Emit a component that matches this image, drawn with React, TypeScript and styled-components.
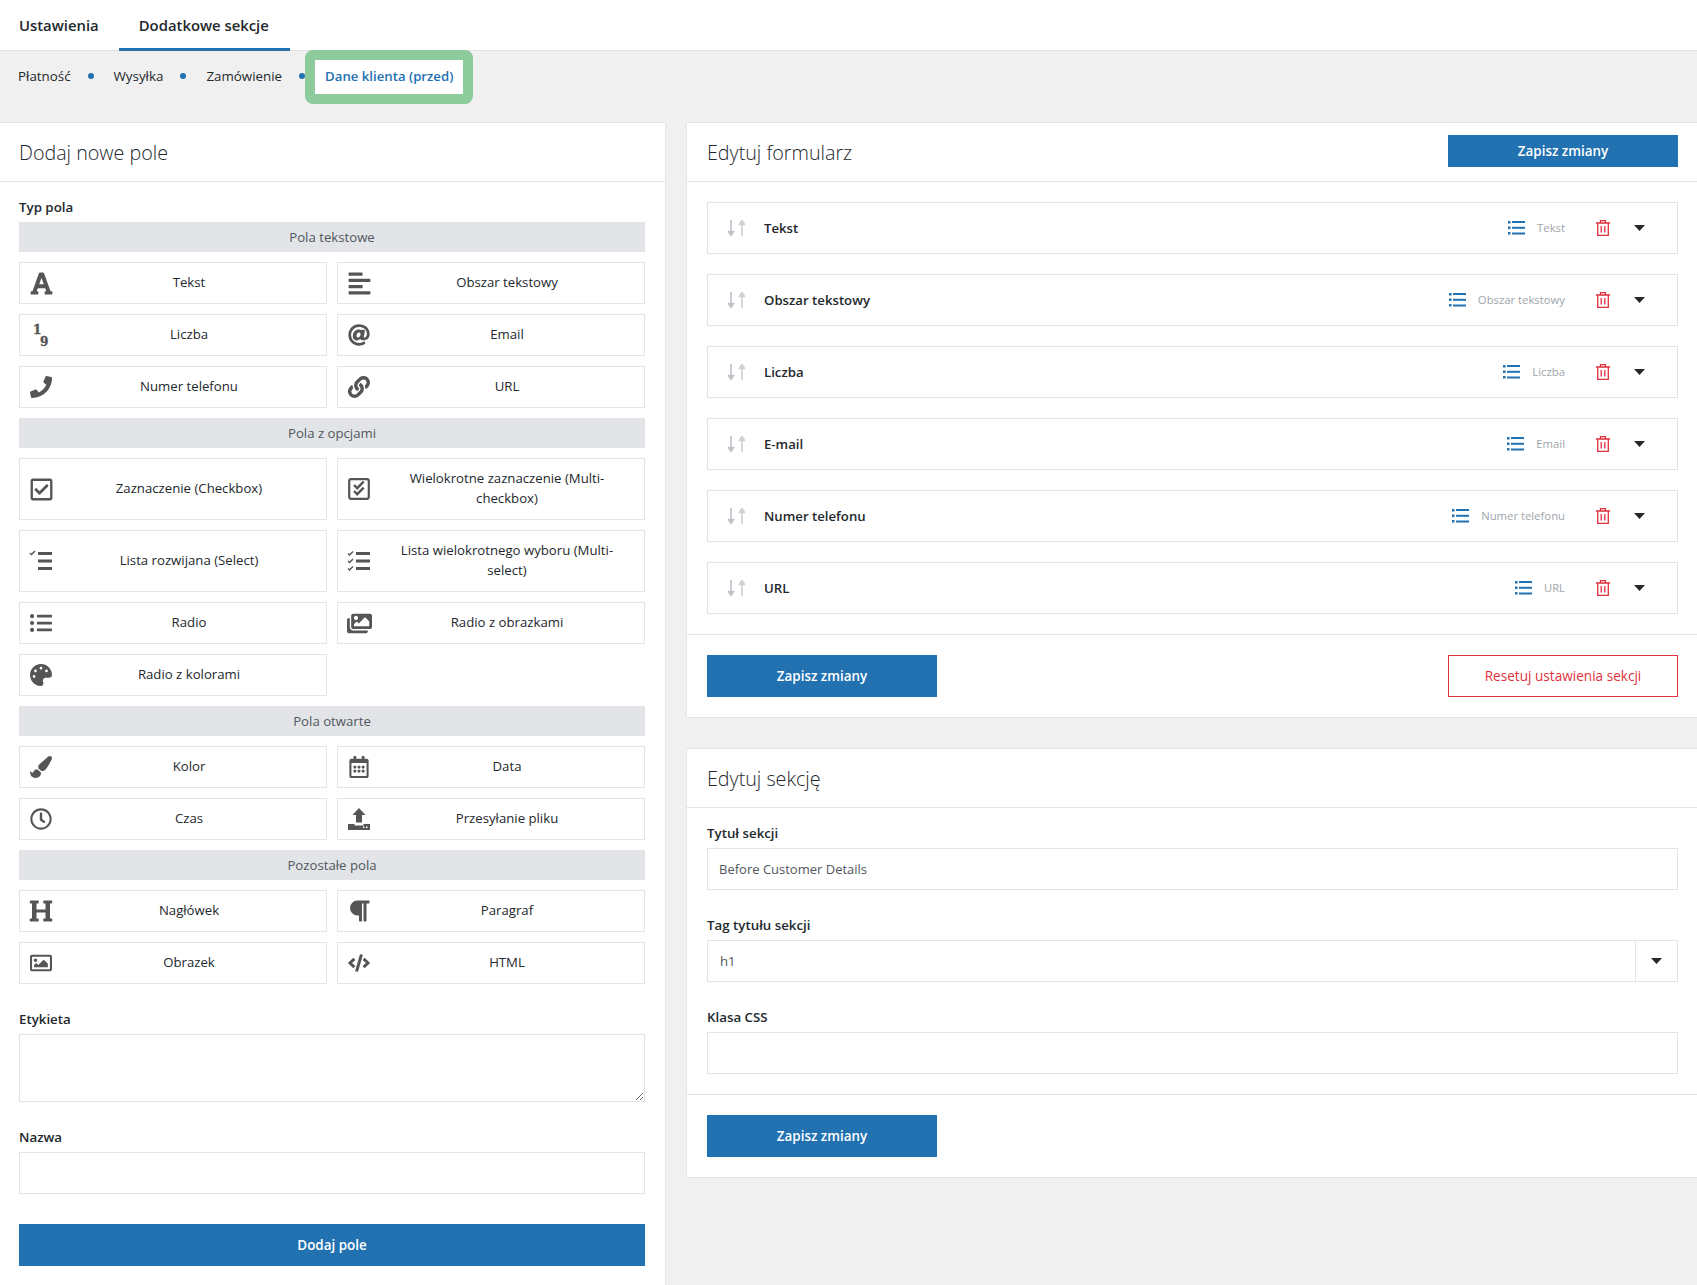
import React from 'react';
import styled, { createGlobalStyle } from 'styled-components';
import {
  FaFont, FaAlignLeft, FaAt, FaPhone, FaLink, FaRegCheckSquare, FaListUl, FaImages, FaPalette,
  FaPaintBrush, FaRegCalendarAlt, FaRegClock, FaHeading, FaParagraph, FaRegImage, FaCode,
} from 'react-icons/fa';

const GlobalStyle = createGlobalStyle`
  html, body { margin: 0; padding: 0; background: #f0f0f0; }
  * { box-sizing: border-box; }
  body { font-family: "Open Sans", "Liberation Sans", sans-serif; font-size: 13.2px; color: #23282d; }
`;

const Page = styled.div`
  height: 1285px;
  overflow: hidden;
  background: #f0f0f0;
`;

const Tabs = styled.nav`
  display: flex;
  height: 51px;
  padding-left: 0;
  background: #fff;
  border-bottom: 1px solid #e2e4e7;
`;

const Tab = styled.a<{ $active?: boolean }>`
  display: flex;
  align-items: center;
  height: 51px;
  padding: 2px 20px 0 19px;
  font-size: 14.85px;
  font-weight: 600;
  color: #23282d;
  border-bottom: 3px solid ${(p) => (p.$active ? '#2271b1' : 'transparent')};
  &:last-child { padding: 2px 21px 0 20px; }
`;

const SubNav = styled.div`
  display: flex;
  align-items: center;
  height: 34px;
  margin: 9px 0 28px;
  padding-left: 18px;
`;

const SubItem = styled.a<{ $active?: boolean }>`
  position: relative;
  display: flex;
  align-items: center;
  height: 34px;
  margin-left: ${(p) => (p.$active ? '-10px' : '0')};
  padding: 0 ${(p) => (p.$active ? '10px' : '0')} 2px;
  background: ${(p) => (p.$active ? '#fff' : 'transparent')};
  color: ${(p) => (p.$active ? '#2271b1' : '#23282d')};
  font-size: ${(p) => (p.$active ? '13.2px' : '13.35px')};
  font-weight: ${(p) => (p.$active ? 600 : 400)};
  &::before {
    content: ${(p) => (p.$active ? '""' : 'none')};
    position: absolute;
    inset: -10px;
    border: 10px solid #8dca9c;
    border-radius: 8px;
  }
`;

const Dot = styled.span`
  width: 6px;
  height: 6px;
  margin: 0 20px 2px 17px;
  border-radius: 50%;
  background: #2271b1;
`;

const Columns = styled.div`
  display: grid;
  grid-template-columns: 666px 1fr;
  column-gap: 20px;
  align-items: start;
`;

const Stack = styled.div`
  display: flex;
  flex-direction: column;
  gap: 30px;
`;

const Panel = styled.section`
  background: #fff;
  border: 1px solid #e2e4e7;
  border-right-width: 0;
`;

const LeftPanel = styled(Panel)`
  border-left: 0;
  border-right-width: 1px;
  height: 1200px;
`;

const PanelHeader = styled.header`
  display: flex;
  align-items: center;
  justify-content: space-between;
  height: 59px;
  padding: 0 19px 0 20px;
  border-bottom: 1px solid #e2e4e7;
`;

const LeftHeader = styled(PanelHeader)`
  padding-left: 19px;
`;

const PanelTitle = styled.h2`
  margin: 0;
  font-size: 19.7px;
  font-weight: 300;
  color: #23282d;
`;

const PanelBody = styled.div`
  padding: 15px 19px 20px 20px;
`;

const LeftBody = styled.div`
  padding: 15px 20px 20px 19px;
`;

const RowsBody = styled.div`
  display: flex;
  flex-direction: column;
  gap: 20px;
  padding: 20px 19px 20px 20px;
`;

const PanelFooter = styled.div`
  display: flex;
  justify-content: space-between;
  padding: 20px 19px 20px 20px;
  border-top: 1px solid #e2e4e7;
`;

const Button = styled.button<{ $small?: boolean; $full?: boolean }>`
  display: block;
  width: ${(p) => (p.$full ? '100%' : '230px')};
  height: ${(p) => (p.$small ? '32px' : '42px')};
  margin-bottom: ${(p) => (p.$small ? '2px' : '0')};
  padding: 0 0 1px;
  border: 0;
  border-radius: 0;
  background: #2271b1;
  color: #fff;
  font: 600 13.4px "Open Sans", "Liberation Sans", sans-serif;
`;

const ResetButton = styled(Button)`
  background: #fff;
  border: 1px solid #e0323c;
  color: #e0323c;
  font-weight: 400;
  font-size: 13.6px;
`;

const Label = styled.label`
  display: block;
  height: 20px;
  margin-bottom: 5px;
  line-height: 20px;
  font-weight: 600;
  font-size: 13.3px;
  color: #23282d;
`;

const Grid = styled.div`
  display: grid;
  grid-template-columns: 308px 308px;
  gap: 10px;
`;

const GroupBar = styled.div`
  grid-column: 1 / -1;
  height: 30px;
  line-height: 30px;
  text-align: center;
  background: #e2e4e7;
  color: #50575e;
`;

const TypeButton = styled.div`
  display: flex;
  align-items: center;
  padding: 0 10px;
  background: #fff;
  border: 1px solid #e2e4e7;
  line-height: 20px;
`;

const IconBox = styled.span<{ $size?: number }>`
  flex: 0 0 22px;
  display: flex;
  justify-content: center;
  align-items: center;
  width: 22px;
  height: 22px;
  color: #555;
  font-size: ${(p) => p.$size ?? 22}px;
  svg { flex: none; overflow: visible; }
`;

const TypeLabel = styled.span`
  flex: 1;
  margin-left: 10px;
  padding: 9px 10px 11px;
  text-align: center;
  color: #23282d;
`;

const Spaced = styled.div`
  margin-top: 25px;
`;

const TextArea = styled.textarea`
  display: block;
  width: 100%;
  height: 68px;
  border: 1px solid #e2e4e7;
  border-radius: 0;
  background: #fff;
  outline: 0;
`;

const Input = styled.input`
  display: block;
  width: 100%;
  height: 42px;
  padding: 0 11px;
  border: 1px solid #e2e4e7;
  border-radius: 0;
  background: #fff;
  color: #50575e;
  font: 400 13px "Open Sans", "Liberation Sans", sans-serif;
  outline: 0;
`;

const AddButtonWrap = styled.div`
  margin-top: 30px;
`;

const FieldRow = styled.div`
  display: flex;
  align-items: center;
  height: 52px;
  padding: 0 32px 0 20px;
  border: 1px solid #e2e4e7;
`;

const FieldTitle = styled.span`
  flex: 1;
  margin: 0 0 1px 19px;
  font-weight: 600;
  font-size: 13.2px;
  color: #23282d;
`;

const FieldType = styled.span`
  margin: 0 31px 1px 12px;
  font-size: 11.3px;
  color: #a0a5aa;
`;

const CaretWrap = styled.span`
  display: flex;
  margin-left: 24px;
`;

const Field = styled.div`
  margin-bottom: 25px;
  &:last-child { margin-bottom: 0; }
`;

const SelectBox = styled.div`
  display: flex;
  align-items: center;
  height: 42px;
  border: 1px solid #e2e4e7;
  color: #50575e;
`;

const SelectValue = styled.span`
  flex: 1;
  padding-left: 12px;
`;

const SelectArrow = styled.span`
  display: flex;
  align-items: center;
  justify-content: center;
  width: 42px;
  height: 100%;
  border-left: 1px solid #e2e4e7;
`;

const Numbers = () => (
  <svg width="22" height="22" viewBox="0 0 22 22" fill="#555" stroke="#555" strokeWidth=".4" fontFamily="'DejaVu Serif', serif" fontWeight="700">
    <text x="3" y="10" fontSize="12">1</text>
    <text x="10" y="21.500" fontSize="12">9</text>
  </svg>
);

const MultiCheck = () => (
  <svg width="22" height="22" viewBox="0 0 22 22">
    <rect x="1.200" y="1.200" width="19.600" height="19.600" rx="2" fill="none" stroke="#555" strokeWidth="2.200" />
    <path d="M6 6.500l3.200 3.200 6.500-6.500M6 12.500l3.200 3.200 6.500-6.500" fill="none" stroke="#555" strokeWidth="2.400" transform="translate(0 .5)" />
  </svg>
);

const SelectList = () => (
  <svg width="22" height="22" viewBox="0 0 22 22" fill="#555">
    <path d="M0 3l1.500 1.500L5 1" fill="none" stroke="#555" strokeWidth="1.500" />
    <rect x="8" y="2" width="14" height="3" />
    <rect x="8" y="9.500" width="14" height="3" />
    <rect x="8" y="17" width="14" height="3" />
  </svg>
);

const MultiSelectList = () => (
  <svg width="22" height="22" viewBox="0 0 22 22" fill="#555">
    <g fill="none" stroke="#555" strokeWidth="1.500">
      <path d="M0 3.500l1.500 1.500L5 1.500" />
      <path d="M0 11l1.500 1.500L5 9" />
      <path d="M0 18.500L1.500 20 5 16.500" />
    </g>
    <rect x="8" y="2" width="14" height="3" />
    <rect x="8" y="9.500" width="14" height="3" />
    <rect x="8" y="17" width="14" height="3" />
  </svg>
);

const UploadIcon = () => (
  <svg width="22" height="22" viewBox="0 0 22 22" fill="#555">
    <path d="M11 0l6.500 7H14v7.500H8V7H4.500z" />
    <path d="M0 16h6.500v1.500h9V16H22v6H0z" />
    <rect x="15" y="18.500" width="1.500" height="1.500" fill="#fff" />
    <rect x="18" y="18.500" width="1.500" height="1.500" fill="#fff" />
  </svg>
);

const SortIcon = () => (
  <svg width="17" height="16" viewBox="0 0 17 16">
    <path d="M3 0v13M0.500 11.500L3 15.500l2.500-4z" fill="#bfc3c8" stroke="#bfc3c8" strokeWidth="1.600" />
    <path d="M14 16V3M11.500 4.500L14 .5l2.500 4z" fill="#ccd0d4" stroke="#ccd0d4" strokeWidth="1.600" />
  </svg>
);

const BlueList = () => (
  <svg width="17" height="16" viewBox="0 0 17 16" fill="#2271b1">
    <rect x="0" y="1" width="2.500" height="2.500" />
    <rect x="0" y="6.500" width="2.500" height="2.500" />
    <rect x="0" y="12" width="2.500" height="2.500" />
    <rect x="4" y="1" width="13" height="2" />
    <rect x="4" y="6.800" width="13" height="2" />
    <rect x="4" y="12.500" width="13" height="2" />
  </svg>
);

const Trash = () => (
  <svg width="14" height="16" viewBox="0 0 14 16" fill="none" stroke="#e0323c" strokeWidth="1.300">
    <path d="M0 3h14M4.500 3V.7h5V3M1.700 3v12.300h10.600V3M5.200 6v6.500M8.800 6v6.500" />
  </svg>
);

const Caret = () => (
  <svg width="11" height="6" viewBox="0 0 11 6">
    <path d="M0 0h11L5.500 6z" fill="#23282d" />
  </svg>
);

type TypeItem = { label: string; icon: React.ReactNode; size?: number };

const groups: { title: string; items: TypeItem[] }[] = [
  {
    title: 'Pola tekstowe',
    items: [
      { label: 'Tekst', icon: <FaFont />, size: 25 },
      { label: 'Obszar tekstowy', icon: <FaAlignLeft />, size: 25 },
      { label: 'Liczba', icon: <Numbers /> },
      { label: 'Email', icon: <FaAt /> },
      { label: 'Numer telefonu', icon: <FaPhone /> },
      { label: 'URL', icon: <FaLink /> },
    ],
  },
  {
    title: 'Pola z opcjami',
    items: [
      { label: 'Zaznaczenie (Checkbox)', icon: <FaRegCheckSquare />, size: 25 },
      { label: 'Wielokrotne zaznaczenie (Multi-checkbox)', icon: <MultiCheck /> },
      { label: 'Lista rozwijana (Select)', icon: <SelectList /> },
      { label: 'Lista wielokrotnego wyboru (Multi-select)', icon: <MultiSelectList /> },
      { label: 'Radio', icon: <FaListUl /> },
      { label: 'Radio z obrazkami', icon: <FaImages />, size: 25 },
      { label: 'Radio z kolorami', icon: <FaPalette /> },
    ],
  },
  {
    title: 'Pola otwarte',
    items: [
      { label: 'Kolor', icon: <FaPaintBrush /> },
      { label: 'Data', icon: <FaRegCalendarAlt /> },
      { label: 'Czas', icon: <FaRegClock /> },
      { label: 'Przesyłanie pliku', icon: <UploadIcon /> },
    ],
  },
  {
    title: 'Pozostałe pola',
    items: [
      { label: 'Nagłówek', icon: <FaHeading />, size: 24 },
      { label: 'Paragraf', icon: <FaParagraph />, size: 24 },
      { label: 'Obrazek', icon: <FaRegImage /> },
      { label: 'HTML', icon: <FaCode /> },
    ],
  },
];

const rows = [
  { title: 'Tekst', type: 'Tekst' },
  { title: 'Obszar tekstowy', type: 'Obszar tekstowy' },
  { title: 'Liczba', type: 'Liczba' },
  { title: 'E-mail', type: 'Email' },
  { title: 'Numer telefonu', type: 'Numer telefonu' },
  { title: 'URL', type: 'URL' },
];

export default function App() {
  return (
    <Page>
      <GlobalStyle />
      <Tabs>
        <Tab>Ustawienia</Tab>
        <Tab $active>Dodatkowe sekcje</Tab>
      </Tabs>
      <SubNav>
        <SubItem>Płatność</SubItem>
        <Dot />
        <SubItem>Wysyłka</SubItem>
        <Dot />
        <SubItem>Zamówienie</SubItem>
        <Dot />
        <SubItem $active>Dane klienta (przed)</SubItem>
      </SubNav>
      <Columns>
        <LeftPanel>
          <LeftHeader>
            <PanelTitle>Dodaj nowe pole</PanelTitle>
          </LeftHeader>
          <LeftBody>
            <Label>Typ pola</Label>
            <Grid>
              {groups.map((g) => (
                <React.Fragment key={g.title}>
                  <GroupBar>{g.title}</GroupBar>
                  {g.items.map((item) => (
                    <TypeButton key={item.label}>
                      <IconBox $size={item.size}>{item.icon}</IconBox>
                      <TypeLabel>{item.label}</TypeLabel>
                    </TypeButton>
                  ))}
                </React.Fragment>
              ))}
            </Grid>
            <Spaced>
              <Label>Etykieta</Label>
              <TextArea />
            </Spaced>
            <Spaced>
              <Label>Nazwa</Label>
              <Input />
            </Spaced>
            <AddButtonWrap>
              <Button $full>Dodaj pole</Button>
            </AddButtonWrap>
          </LeftBody>
        </LeftPanel>
        <Stack>
          <Panel>
            <PanelHeader>
              <PanelTitle>Edytuj formularz</PanelTitle>
              <Button $small>Zapisz zmiany</Button>
            </PanelHeader>
            <RowsBody>
              {rows.map((r) => (
                <FieldRow key={r.title}>
                  <SortIcon />
                  <FieldTitle>{r.title}</FieldTitle>
                  <BlueList />
                  <FieldType>{r.type}</FieldType>
                  <Trash />
                  <CaretWrap>
                    <Caret />
                  </CaretWrap>
                </FieldRow>
              ))}
            </RowsBody>
            <PanelFooter>
              <Button>Zapisz zmiany</Button>
              <ResetButton>Resetuj ustawienia sekcji</ResetButton>
            </PanelFooter>
          </Panel>
          <Panel>
            <PanelHeader>
              <PanelTitle>Edytuj sekcję</PanelTitle>
            </PanelHeader>
            <PanelBody>
              <Field>
                <Label>Tytuł sekcji</Label>
                <Input defaultValue="Before Customer Details" />
              </Field>
              <Field>
                <Label>Tag tytułu sekcji</Label>
                <SelectBox>
                  <SelectValue>h1</SelectValue>
                  <SelectArrow>
                    <Caret />
                  </SelectArrow>
                </SelectBox>
              </Field>
              <Field>
                <Label>Klasa CSS</Label>
                <Input />
              </Field>
            </PanelBody>
            <PanelFooter>
              <Button>Zapisz zmiany</Button>
            </PanelFooter>
          </Panel>
        </Stack>
      </Columns>
    </Page>
  );
}
